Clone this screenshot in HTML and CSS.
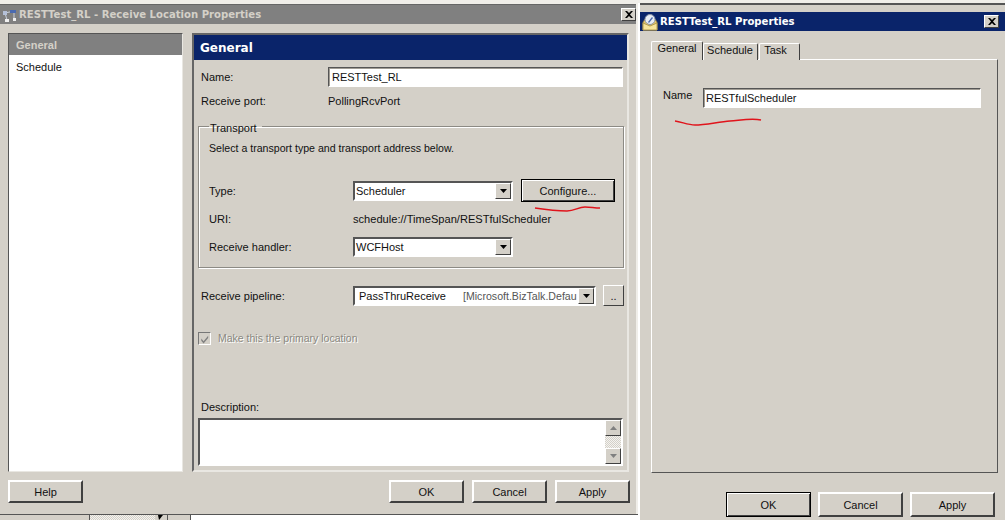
FILE: index.html
```html
<!DOCTYPE html>
<html lang="en">
<head>
<meta charset="utf-8">
<title>RESTTest_RL Properties</title>
<link rel="stylesheet" href="styles.css">
</head>
<body>
<div class="desktop">
  <div class="under"><span class="u-a"></span><span class="u-b"></span><span class="u-arrow"><svg viewBox="0 0 5 5" width="5" height="5"><path d="M0 0h5L1 5z" fill="#000"/></svg></span><span class="u-c"></span><span class="u-d"></span></div>

  <section class="win win-left">
    <header class="title inactive">
      <svg class="ticon" viewBox="0 0 16 16" width="16" height="16"><path d="M3 6 L12 4 M3 6 L5 13 M12 4 L12 11" stroke="#c8d0dc" fill="none"/><rect x="1" y="4" width="4" height="4" fill="#b4c0d8"/><rect x="8" y="3" width="6" height="3" fill="#4a6ab0"/><rect x="3" y="12" width="4" height="3" fill="#f0f0f0"/><rect x="11" y="11" width="3" height="3" fill="#f0f0f0"/></svg>
      <span class="title-text">RESTTest_RL - Receive Location Properties</span>
      <button class="close"><svg viewBox="0 0 8 7" width="8" height="7"><path d="M0 0h2l2 2 2-2h2L5 3.500 8 7H6L4 5 2 7H0l3-3.500z" fill="#000"/></svg></button>
    </header>
    <div class="left-body">
      <nav class="list">
        <div class="list-item selected">General</div>
        <div class="list-item">Schedule</div>
      </nav>
      <main class="panel">
        <h2 class="panel-head">General</h2>
        <div class="row row-name"><label class="lab">Name:</label><div class="input i-name">RESTTest_RL</div></div>
        <div class="row row-port"><span class="lab">Receive port:</span><span>PollingRcvPort</span></div>
        <fieldset class="group">
          <legend>Transport</legend>
          <p class="hint">Select a transport type and transport address below.</p>
          <div class="row row-type">
            <span class="lab2">Type:</span>
            <div class="select s-std"><span class="sel-text">Scheduler</span><span class="arrow"><svg viewBox="0 0 7 4" width="7" height="4"><path d="M0 0h7L3.500 4z" fill="#000"/></svg></span></div>
            <button class="btn btn-config">Configure...</button>
          </div>
          <div class="row row-uri"><span class="lab2">URI:</span><span>schedule://TimeSpan/RESTfulScheduler</span></div>
          <div class="row row-handler">
            <span class="lab2">Receive handler:</span>
            <div class="select s-std"><span class="sel-text">WCFHost</span><span class="arrow"><svg viewBox="0 0 7 4" width="7" height="4"><path d="M0 0h7L3.500 4z" fill="#000"/></svg></span></div>
          </div>
        </fieldset>
        <div class="row row-pipe">
          <span class="lab">Receive pipeline:</span>
          <div class="select s-pipe"><span class="sel-text pipe-a">PassThruReceive</span><span class="pipe-b">[Microsoft.BizTalk.Defau</span><span class="arrow"><svg viewBox="0 0 7 4" width="7" height="4"><path d="M0 0h7L3.500 4z" fill="#000"/></svg></span></div>
          <button class="btn btn-dots">..</button>
        </div>
        <div class="check-row">
          <span class="check"><svg viewBox="0 0 12 12" width="12" height="12"><path d="M2.500 5.500l2.500 3 5-6v2.500l-5 6-2.500-3z" fill="#808080"/></svg></span>
          <span class="disabled">Make this the primary location</span>
        </div>
        <div class="desc-label">Description:</div>
        <div class="textarea">
          <div class="scroll">
            <span class="sb-btn"><svg viewBox="0 0 7 4" width="7" height="4"><path d="M0 4h7L3.500 0z" fill="#808080"/></svg></span>
            <span class="sb-track"></span>
            <span class="sb-btn"><svg viewBox="0 0 7 4" width="7" height="4"><path d="M0 0h7L3.500 4z" fill="#808080"/></svg></span>
          </div>
        </div>
      </main>
    </div>
    <footer class="actions">
      <button class="btn btn-foot">Help</button>
      <span class="spacer"></span>
      <button class="btn btn-foot">OK</button>
      <button class="btn btn-foot">Cancel</button>
      <button class="btn btn-foot">Apply</button>
    </footer>
  </section>

  <section class="win win-right">
    <header class="title active">
      <svg class="ticon ticon-r" viewBox="0 0 18 18" width="18" height="18"><path d="M2 9 L5 5 H13 L16 9 V17 H2z" fill="#e9c766" stroke="#8a7a50"/><circle cx="9" cy="6.500" r="5" fill="#e8ecf4" stroke="#8a94a8"/><path d="M7 9l4-5 1 1-4 5z" fill="#4a6ab0"/><path d="M2 10l7 3 7-3v7H2z" fill="#f7e49c" stroke="#b09a50"/></svg>
      <span class="title-text">RESTTest_RL Properties</span>
      <button class="close"><svg viewBox="0 0 8 7" width="8" height="7"><path d="M0 0h2l2 2 2-2h2L5 3.500 8 7H6L4 5 2 7H0l3-3.500z" fill="#000"/></svg></button>
    </header>
    <div class="tabs">
      <span class="tab tab-on">General</span>
      <span class="tab tab-2">Schedule</span>
      <span class="tab tab-3">Task</span>
    </div>
    <div class="tab-panel">
      <div class="row row-rname"><label>Name</label><div class="input i-rname">RESTfulScheduler</div></div>
    </div>
    <footer class="actions-r">
      <button class="btn btn-r btn-default">OK</button>
      <button class="btn btn-r">Cancel</button>
      <button class="btn btn-r">Apply</button>
    </footer>
  </section>

  <svg class="ink" viewBox="0 0 1005 520" width="1005" height="520">
    <path d="M535 208 C548 210 558 211 567 211 C575 211 578 207 585 207 C590 207 595 208 600 208" />
    <path d="M675 121 C682 122 688 125 695 125 C705 125 718 122 730 121 C742 120 752 118 761 120" />
  </svg>
</div>
</body>
</html>
```
FILE: styles.css
```css
* { box-sizing: border-box; }
html, body { margin: 0; padding: 0; }
body { width: 1005px; height: 520px; overflow: hidden; background: #e8e6e0; }
.desktop {
  position: relative;
  width: 1005px;
  height: 520px;
  overflow: hidden;
  font: 11px/14px "Liberation Sans", Arial, sans-serif;
  color: #111;
  background: #f0eee9;
}
button { font: inherit; color: inherit; padding: 0; }
p, h2, fieldset, legend { margin: 0; padding: 0; }

.under { position: absolute; left: 0; top: 514px; height: 6px; width: 640px; background: #d4d0c8; border-top: 1px solid #555; display: flex; }
.u-a { width: 89px; }
.u-b { width: 66px; border-left: 1px solid #555; background: repeating-conic-gradient(#d4d0c8 0 25%, #f4f3f0 0 50%) 0 0 / 2px 2px; }
.u-arrow { width: 13px; border-right: 1px solid #555; padding-left: 3px; display: flex; }
.u-c { width: 22px; }
.u-d { flex: 1; border-left: 1px solid #555; background: #fff; }

.win { position: absolute; background: #d4d0c8; }
.win-left { left: 0; top: 4px; width: 636px; height: 510px; border-top: 1px solid #666; }
.win-right { left: 640px; top: 3px; width: 365px; height: 517px; border-top: 2px solid #555; box-shadow: -2px 0 0 #fff; padding-top: 7px; }

.title { display: flex; align-items: center; font: bold 10.100px/14px "DejaVu Sans", sans-serif; color: #fff; height: 19px; }
.inactive { background: #808080; color: #d4d0c8; }
.active { background: #0a246a; }
.ticon { margin-left: 2px; flex: none; }
.ticon-r { margin-left: 1px; }
.title-text { margin-left: 1px; flex: 1; white-space: nowrap; }
.close { width: 15px; height: 13px; margin-right: 0; background: #d4d0c8; border: 1px solid; border-color: #fff #404040 #404040 #fff; display: flex; align-items: center; justify-content: center; }
.win-right .close { margin-right: 6px; }

.left-body { display: flex; gap: 9px; padding: 9px 0 0 8px; height: 448px; }
.list { width: 175px; height: 439px; background: #fff; border: 1px solid; border-color: #555 #e9e7e2 #e9e7e2 #555; }
.list-item { height: 22px; padding: 5px 7px 0; }
.list-item.selected { height: 21px; padding-top: 4px; background: #808080; color: #d4d0c8; font-weight: bold; }
.panel { width: 437px; height: 439px; border: 2px solid; border-color: #666 #e9e7e2 #e9e7e2 #666; }
.panel-head { height: 25px; padding: 6px 6px 0; background: #0a246a; color: #fff; font: bold 12px/15px "DejaVu Sans", sans-serif; }

.row { display: flex; align-items: center; white-space: nowrap; }
.lab { width: 134px; padding-left: 7px; flex: none; }
.lab2 { width: 144px; flex: none; }
.row-name { margin-top: 7px; height: 20px; }
.row-port { margin-top: 7px; height: 14px; }
.input { background: #fff; border: 1px solid; border-color: #555 #fff #fff #555; box-shadow: inset 1px 1px 0 #a09c94; height: 20px; padding: 2px 0 0 3px; }
.i-name { width: 295px; }

.group { margin: 13px 0 0 4px; width: 426px; min-width: 0; height: 147px; border: 1px solid #8c8a84; box-shadow: inset 1px 1px 0 #fff, 1px 1px 0 #fff; padding: 0 0 0 10px; }
.group legend { margin-left: 0; padding: 0 3px; position: relative; left: -2px; top: 3px; height: 10px; line-height: 8px; }
.hint { margin-top: 10px; height: 14px; font-size: 10.600px; }
.row-type { margin-top: 24px; height: 23px; }
.row-uri { margin-top: 10px; height: 14px; font-size: 11.100px; }
.row-handler { margin-top: 11px; height: 20px; }

.select { display: flex; align-items: center; height: 20px; background: #fff; border: 2px solid; border-color: #555 #fff #fff #555; }
.s-std { width: 160px; }
.s-pipe { width: 243px; }
.sel-text { padding-left: 1px; flex: 1; }
.pipe-a { flex: none; width: 108px; padding-left: 4px; }
.pipe-b { flex: 1; min-width: 0; font-size: 10.600px; color: #555; }
.arrow { width: 16px; height: 16px; flex: none; background: #d4d0c8; border: 1px solid; border-color: #fff #404040 #404040 #fff; display: flex; align-items: center; justify-content: center; }

.btn { background: #d4d0c8; border: 2px solid; border-color: #fff #404040 #404040 #fff; text-align: center; }
.btn-config { width: 94px; height: 23px; margin-left: 8px; border: 1px solid #000; box-shadow: inset 1px 1px 0 #fff, inset -1px -1px 0 #404040; }

.row-pipe { margin-top: 17px; height: 21px; }
.row-pipe .lab { width: 159px; padding-left: 7px; }
.btn-dots { width: 21px; height: 21px; margin-left: 7px; border-width: 1px; }

.check-row { display: flex; align-items: center; margin: 25px 0 0 4px; height: 14px; }
.check { width: 13px; height: 13px; background: #d4d0c8; border: 1px solid; border-color: #777 #fff #fff #777; flex: none; display: flex; }
.disabled { margin-left: 7px; font-size: 10.500px; color: #8a8880; text-shadow: 1px 1px 0 #fff; }

.desc-label { margin: 56px 0 0 7px; height: 17px; line-height: 12px; }
.textarea { margin-left: 4px; width: 425px; height: 48px; background: #fff; border: 2px solid; border-color: #555 #fff #fff #555; display: flex; justify-content: flex-end; }
.scroll { width: 16px; height: 100%; display: flex; flex-direction: column; }
.sb-btn { height: 16px; flex: none; background: #d4d0c8; border: 1px solid; border-color: #fff #404040 #404040 #fff; display: flex; align-items: center; justify-content: center; }
.sb-track { flex: 1; background: repeating-conic-gradient(#d4d0c8 0 25%, #f4f3f0 0 50%) 0 0 / 2px 2px; }

.actions { display: flex; gap: 8px; padding: 8px 6px 0 8px; }
.spacer { flex: 1; }
.btn-foot { width: 75px; height: 23px; }

.tabs { display: flex; padding: 10px 0 0 11px; height: 28px; }
.tab { height: 17px; margin-top: 2px; padding-top: 0; line-height: 12px; text-align: center; background: #d4d0c8; border: 1px solid; border-color: #fff #404040 #d4d0c8 #fff; border-bottom: none; border-radius: 2px 2px 0 0; }
.tab-on { width: 52px; margin-top: 0; height: 19px; position: relative; z-index: 1; }
.tab-2 { width: 55px; padding-right: 1px; }
.tab-3 { width: 41px; margin-left: 1px; padding-right: 8px; }
.tab-panel { margin-left: 11px; width: 347px; height: 414px; border: 1px solid; border-color: #fff #555 #555 #fff; }
.row-rname { margin-top: 28px; padding-left: 11px; }
.row-rname label { width: 40px; margin-top: -6px; }
.i-rname { width: 278px; height: 20px; padding: 2px 0 0 2px; }

.actions-r { display: flex; gap: 7px; padding: 19px 0 0 86px; }
.btn-r { width: 85px; height: 25px; }
.btn-default { border: 1px solid #000; box-shadow: inset 1px 1px 0 #fff, inset -1px -1px 0 #404040; }

.ink { position: absolute; left: 0; top: 0; pointer-events: none; }
.ink path { fill: none; stroke: #e0141c; stroke-width: 1.500; }
```
